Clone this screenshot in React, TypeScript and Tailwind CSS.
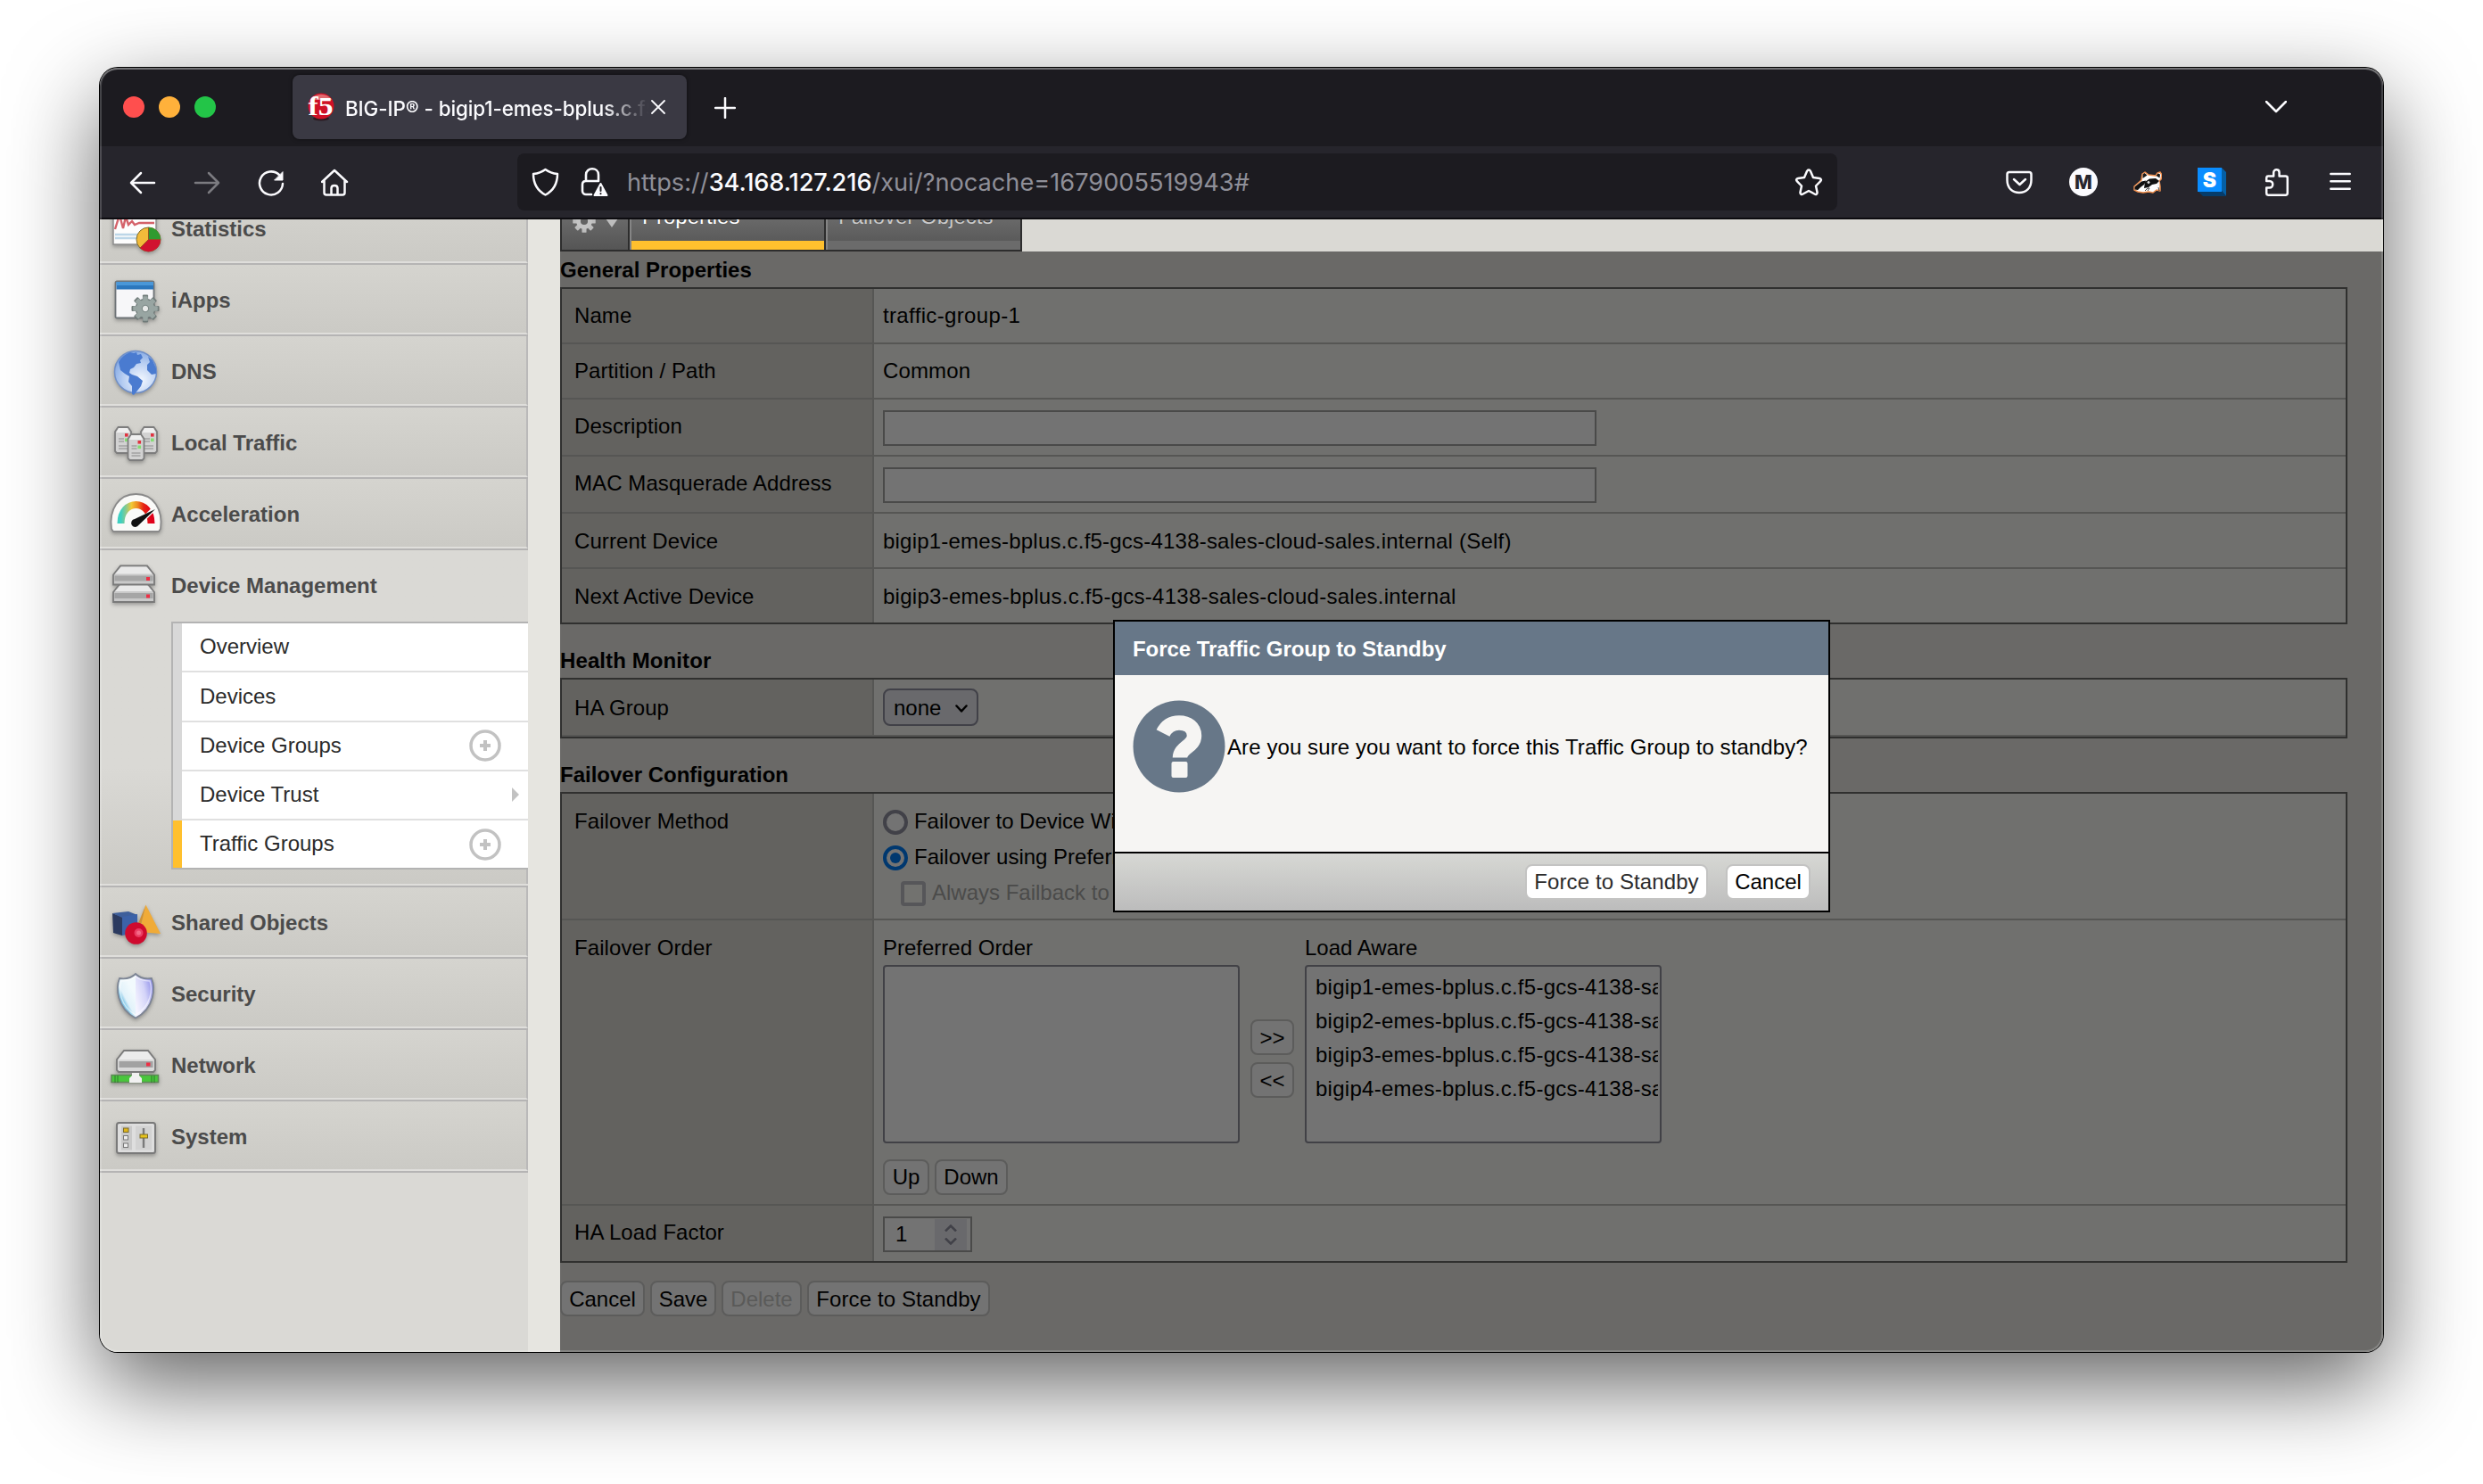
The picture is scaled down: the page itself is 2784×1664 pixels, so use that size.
import React from "react";

type P = { children?: React.ReactNode; className?: string };

/* ---------- sidebar icons, all on a 56x56 canvas ---------- */

const ShadowIcon = ({ children }: P) => (
  <svg viewBox="0 0 56 56" className="h-14 w-14 shrink-0 overflow-visible drop-shadow-[0_2px_2px_rgba(0,0,0,0.3)]">
    {children}
  </svg>
);

const Gear = ({ x, y, r, fill, hole }: { x: number; y: number; r: number; fill: string; hole: string }) => (
  <g transform={`translate(${x} ${y}) scale(${r / 15})`}>
    {[0, 45, 90, 135].map((a) => (
      <rect key={a} x="-3" y="-15" width="6" height="30" rx="1" fill={fill} transform={`rotate(${a})`} />
    ))}
    <circle r="11" fill={fill} />
    <circle r="4" fill={hole} stroke="#7d8a88" strokeWidth="1.2" />
  </g>
);

const StatisticsIcon = () => (
  <ShadowIcon>
    <rect x="4" y="-4" width="48" height="49" fill="#fdfdfd" stroke="#8d8d8d" strokeWidth="1.5" />
    <path d="M6 28l5-16 4 15 3-13 3 9 4-4 3 4 5-2h17" fill="none" stroke="#d4626a" strokeWidth="2.4" />
    <path d="M6 34h44M6 38h44" stroke="#bcd6e8" strokeWidth="2.4" />
    <circle cx="43.5" cy="39.5" r="13.5" fill="#f2bb3a" stroke="#7b6a2c" strokeWidth="1" />
    <path d="M43.5 39.5V26a13.5 13.5 0 0 1 13.5 13.5z" fill="#2f9a2f" />
    <path d="M43.5 39.5H57a13.5 13.5 0 0 1-23 9.6z" fill="#d1122f" />
    <path d="M43.5 26v13.5l-9.5 9.6M43.5 39.5H57" stroke="#8a4a20" strokeWidth="0.8" fill="none" />
  </ShadowIcon>
);

const IAppsIcon = () => (
  <ShadowIcon>
    <rect x="6.5" y="6.5" width="43" height="41" rx="1.5" fill="#f7f7f9" stroke="#6f7478" strokeWidth="1.8" />
    <rect x="7.500" y="7" width="41.500" height="8.500" fill="#2c77bd" />
    <rect x="7.500" y="7" width="41.500" height="4" fill="#4a97d8" />
    <Gear x={40} y={37} r={15.5} fill="#707b79" hole="#707b79" />
    <Gear x={40} y={37} r={13.8} fill="#98a5a2" hole="#e8eae9" />
  </ShadowIcon>
);

const DnsIcon = () => (
  <ShadowIcon>
    <defs>
      <radialGradient id="globe" cx="0.62" cy="0.7" r="0.75">
        <stop offset="0" stopColor="#f4f8ff" />
        <stop offset="0.55" stopColor="#b9cff2" />
        <stop offset="1" stopColor="#7da4e2" />
      </radialGradient>
    </defs>
    <circle cx="29" cy="28" r="23.500" fill="url(#globe)" stroke="#6f8fc8" strokeWidth="1.500" />
    <path
      d="M10 17c3-6 8-9 13-11l4 1 3-1 1 3 4-1 2 4-3 3 1 3-5 1-3 4-4 2-1 4 3 2 6 2 6 5-2 6-4 5-4 5-2-1v-9l-4-5 1-6-5-3-5-4z"
      fill="#4a7bd0"
    />
    <path d="M43 11l5 4 4 9 0 6-5 1-5-5 0-6 3-3z" fill="#4a7bd0" />
  </ShadowIcon>
);

const Tower = ({ x, y }: { x: number; y: number }) => (
  <g transform={`translate(${x} ${y})`}>
    <path d="M1 6l3.500-5h11L19 6v22l-2 2H3l-2-2z" fill="#d2d2d2" stroke="#7d7d7d" strokeWidth="1.800" />
    <path d="M2.500 7h15L15 2H5z" fill="#efefef" />
    <path d="M5 14h6M5 17h6M5 22h10M5 25h10" stroke="#a3a3a3" strokeWidth="1.500" />
    <rect x="12" y="8" width="3.600" height="3.600" fill="#e0323f" />
    <rect x="12" y="13.500" width="3.600" height="3.600" fill="#84dd73" />
  </g>
);

const LocalTrafficIcon = () => (
  <ShadowIcon>
    <Tower x={5} y={9} />
    <Tower x={34} y={9} />
    <Tower x={19.500} y={17} />
  </ShadowIcon>
);

const AccelerationIcon = () => (
  <ShadowIcon>
    <defs>
      <linearGradient id="dial" x1="0" x2="1">
        <stop offset="0" stopColor="#3ed0c2" />
        <stop offset="0.18" stopColor="#8fc98a" />
        <stop offset="0.35" stopColor="#f2c935" />
        <stop offset="0.55" stopColor="#ee8a20" />
        <stop offset="0.75" stopColor="#e62414" />
        <stop offset="1" stopColor="#e0001a" />
      </linearGradient>
    </defs>
    <path d="M2 44C-1 22 10 5 29.500 5S60 22 57 44l-2 3H4z" fill="#fafaf8" stroke="#8a8a8a" strokeWidth="1.800" />
    <path d="M12.500 38C12.500 10 46.500 10 46.500 38" fill="none" stroke="url(#dial)" strokeWidth="8" />
    <path d="M51 20L33 38" stroke="#fafaf8" strokeWidth="5" />
    <path d="M51 22L28 33a4.500 4.500 0 1 0 4.500 6.800z" fill="#111" />
  </ShadowIcon>
);

const Box = ({ y }: { y: number }) => (
  <g transform={`translate(0 ${y})`}>
    <path d="M4 11l8-10h30l8 10v11H4z" fill="#c9c9c9" stroke="#7a7a7a" strokeWidth="1.800" />
    <path d="M6 10l7-8h28l7 8z" fill="#e9e9e9" />
    <rect x="5.500" y="12" width="43" height="6" fill="#a6a6a6" />
    <rect x="41" y="13.500" width="4" height="4" fill="#ee2f45" />
  </g>
);

const DeviceIcon = () => (
  <ShadowIcon>
    <Box y={24} />
    <Box y={4.500} />
  </ShadowIcon>
);

const SharedObjectsIcon = () => (
  <ShadowIcon>
    <path d="M3 17l11 4v21L4 39z" fill="#2b3a5f" />
    <path d="M3 17l18-2 10 4-17 3z" fill="#3e5f9b" />
    <path d="M14 21l17-3v20l-17 4z" fill="#3c62a8" />
    <path d="M40.500 7.500L57 40l-24-2z" fill="#f0ab38" />
    <path d="M40.500 7.500L33 38l-4-2z" fill="#cf9031" />
    <circle cx="29.500" cy="39.500" r="12.300" fill="#cf0a2e" />
    <circle cx="32.500" cy="39" r="5" fill="#ea3d63" />
    <circle cx="32.500" cy="39" r="2.500" fill="#f56a88" />
  </ShadowIcon>
);

const SecurityIcon = () => (
  <ShadowIcon>
    <defs>
      <linearGradient id="shL" x1="0" y1="1" x2="0.6" y2="0.2">
        <stop offset="0" stopColor="#1f8ccd" />
        <stop offset="0.5" stopColor="#8fcdea" />
        <stop offset="0.62" stopColor="#e2f2fa" />
        <stop offset="1" stopColor="#f2fafd" />
      </linearGradient>
      <linearGradient id="shR" x1="1" y1="0.1" x2="0" y2="0.7">
        <stop offset="0" stopColor="#8080e6" />
        <stop offset="0.5" stopColor="#d4d4f8" />
        <stop offset="1" stopColor="#f5f4ff" />
      </linearGradient>
    </defs>
    <path d="M29 4.500c-5 5-11 6-18 5-4 10-4 33 18 45z" fill="url(#shL)" />
    <path d="M29 4.500c5 5 11 6 18 5 4 10 4 33-18 45z" fill="url(#shR)" />
    <path
      d="M29 5c-5 5-11 6-18 5-4 10-4 33 18 44.500C51 43 51 20 47 10c-7 1-13 0-18-5z"
      fill="none"
      stroke="#7d8594"
      strokeWidth="1.800"
    />
    <path d="M29 8c-5 4-10 5-16 5-3 9-2 28 16 38 18-10 19-29 16-38-6 0-11-1-16-5z" fill="none" stroke="#fff" strokeOpacity="0.55" strokeWidth="1.400" />
  </ShadowIcon>
);

const NetworkIcon = () => (
  <ShadowIcon>
    <path d="M8 21l8-10h27l8 10v12l-2 2H10l-2-2z" fill="#d9d9d9" stroke="#7a7a7a" strokeWidth="1.800" />
    <path d="M10 21l7-9h25l7 9z" fill="#ececec" />
    <rect x="10.500" y="23" width="38" height="7" fill="#a2a2a2" />
    <rect x="41" y="24.500" width="4.500" height="4" fill="#ee2f45" />
    <rect x="2" y="38.500" width="52.500" height="8" fill="#49c63c" stroke="#5e8a56" strokeWidth="1.500" />
    <path d="M6 39v8M9 39v8M47 39v8M50 39v8" stroke="#2f7d2a" strokeWidth="1" />
    <path d="M25 36h8v3l3 3v5H22v-5l3-3z" fill="#f1f1f1" />
  </ShadowIcon>
);

const SystemIcon = () => (
  <ShadowIcon>
    <rect x="8" y="12" width="43" height="34" rx="2.500" fill="#dedede" stroke="#7a7a7a" strokeWidth="2" />
    <rect x="13" y="15.500" width="12" height="27" fill="#c9c9c9" />
    <rect x="29" y="15.500" width="18" height="27" fill="#d2d2d2" />
    <rect x="15.500" y="18" width="5.500" height="4.500" fill="#dfb51a" stroke="#7a6a2a" />
    <rect x="15.500" y="26.500" width="5" height="4.500" fill="#eee" stroke="#777" />
    <rect x="15.500" y="35" width="5" height="4.500" fill="#eee" stroke="#777" />
    <path d="M38 18v22" stroke="#7a7a7a" strokeWidth="2.400" />
    <rect x="34" y="25" width="8.500" height="4" fill="#e6c31c" stroke="#7a6a2a" />
  </ShadowIcon>
);

/* ---------- browser chrome ---------- */

const Ico = ({ children, size = 32 }: { children: React.ReactNode; size?: number }) => (
  <svg
    width={size}
    height={size}
    viewBox="0 0 32 32"
    fill="none"
    stroke="#fbfbfe"
    strokeWidth="2.500"
    strokeLinecap="round"
    strokeLinejoin="round"
    className="shrink-0"
  >
    {children}
  </svg>
);

const TabStrip = () => (
  <div className="flex h-[88px] items-center bg-[#1c1b20]">
    <div className="ml-[26px] flex gap-4">
      <span className="h-6 w-6 rounded-full bg-[#ff4f4e]" />
      <span className="h-6 w-6 rounded-full bg-[#ffb13b]" />
      <span className="h-6 w-6 rounded-full bg-[#23c548]" />
    </div>
    <div className="ml-[86px] flex h-[72px] w-[442px] items-center rounded-lg bg-[#3a3943] pl-4 shadow-[0_0_4px_rgba(0,0,0,0.5)]">
      <svg width="32" height="32" viewBox="0 0 32 32" className="shrink-0">
        <ellipse cx="16" cy="29" rx="9" ry="2.500" fill="#2b1b22" />
        <circle cx="16" cy="15" r="14.500" fill="#cf1026" />
        <path d="M4 8a14.500 14.500 0 0 1 24 0z" fill="#e0696f" />
        <text x="15.500" y="25" textAnchor="middle" fontFamily="Liberation Serif, serif" fontWeight="700" fontSize="29" fill="#fff" textLength="28" lengthAdjust="spacingAndGlyphs">
          f5
        </text>
      </svg>
      <div className="ml-[11px] w-[340px] overflow-hidden [mask-image:linear-gradient(to_right,#000_290px,transparent_340px)]">
        <span className="block whitespace-nowrap pt-[3px] font-[Inter,sans-serif] text-[22.4px] font-medium leading-7 tracking-[-0.1px] text-[#fbfbfe]">
          BIG-IP® - bigip1-emes-bplus.c.f5
        </span>
      </div>
      <svg width="16" height="16" viewBox="0 0 16 16" className="ml-[3px] shrink-0" stroke="#fbfbfe" strokeWidth="1.800" strokeLinecap="round">
        <path d="M1 1l14 14M15 1L1 15" />
      </svg>
    </div>
    <svg width="24" height="24" viewBox="0 0 24 24" className="ml-[31px] mt-[2px] shrink-0" stroke="#fbfbfe" strokeWidth="2.500" strokeLinecap="round">
      <path d="M12 1v22M1 12h22" />
    </svg>
    <svg width="24" height="14" viewBox="0 0 24 14" className="ml-auto mr-[108px] shrink-0" fill="none" stroke="#fbfbfe" strokeWidth="2.500" strokeLinecap="round" strokeLinejoin="round">
      <path d="M1 1l11 11L23 1" />
    </svg>
  </div>
);

const Badger = () => (
  <svg width="32" height="25" viewBox="0 0 32 25" className="shrink-0">
    <path
      d="M1 21L1 17l8-7 1-7 3-2 4 3 8 1 2-3 3-1 2 3-1 5-2 2 1 6 0 5-4-1-4 3-5-1-6 1-6-1z"
      fill="#fff"
      stroke="#ef8f4e"
      strokeWidth="1.500"
      strokeLinejoin="round"
    />
    <path d="M10.500 8V3.500l2-1.500 3 2.500zM25.500 5l2-2.500 2.500 1-.5 4z" fill="#1a1a1a" />
    <path d="M1.500 20.500v-3l7.500-6 5-1-2 4.500-4 3-3 3zM13 12l5-3.500 7-.5 4 3-3 3-5 1-4 3-5 1z" fill="#111" />
    <path d="M27 14l2-3 .5 5-4 3z" fill="#f4f4f4" />
    <circle cx="17" cy="12.500" r="2" fill="#ddd" stroke="#111" />
    <path d="M13 22l3-3 2 0-2 3M28 18l1 4" fill="none" stroke="#333" strokeWidth="0.900" />
  </svg>
);

const NavBar = () => (
  <div className="flex h-20 items-center bg-[#26252c]">
    <div className="ml-8 flex gap-10">
      <Ico>
        <path d="M29 17H3M14 6L3 17l11 11" />
      </Ico>
      <span className="opacity-40">
        <Ico>
          <path d="M3 17h26M18 6l11 11-11 11" />
        </Ico>
      </span>
      <Ico>
        <path d="M29 18A13 13 0 1 1 25 8" />
        <path d="M29 5v9h-9z" fill="#fbfbfe" strokeWidth="1" />
      </Ico>
      <Ico>
        <path d="M1 16L15 3l14 13M3.500 14v14c0 1.500 1 2.500 2.500 2.500h18c1.500 0 2.500-1 2.500-2.500V14M11.500 30v-7c0-4 7-4 7 0v7" />
      </Ico>
    </div>
    <div className="ml-[188px] flex h-16 w-[1480px] items-center rounded-lg bg-[#1c1b20] pl-[15px]">
      <Ico>
        <path d="M16.500 2c4 3 8 4.500 13.500 5 0 9-3 18-13.500 23.500C6 25 3 16 3 7 8.500 6.500 12.500 5 16.500 2z" />
      </Ico>
      <svg width="34" height="34" viewBox="0 0 34 34" className="ml-[22px] shrink-0" fill="none" stroke="#fbfbfe" strokeWidth="2.600" strokeLinecap="round">
        <path d="M8 16V9c0-9 14-9 14 0v7M14 31H8c-2 0-4-1-4-4v-7c0-3 2-4 4-4h14" />
        <path d="M24.500 19l7 13h-14z" fill="#fbfbfe" strokeWidth="2" strokeLinejoin="round" />
        <path d="M24.500 23v4M24.500 30v.2" stroke="#1c1b20" strokeWidth="2" />
      </svg>
      <span className="ml-[20px] whitespace-nowrap pt-[2px] font-[Inter,sans-serif] text-[27.2px] leading-8 text-[#8f8f98]">
        https://<span className="font-medium tracking-[-0.1px] text-[#fbfbfe]">34.168.127.216</span>/xui/?nocache=1679005519943#
      </span>
      <span className="ml-auto mr-4">
        <Ico>
          <path d="M16 2.500c1 0 1.500.5 2 1.500l3 7 7 1c2 .3 2.500 2 1 3.300L24 20.500l1.500 7c.3 2-1.300 3-3 2L16 26l-6.500 3.500c-1.700 1-3.300 0-3-2L8 20.500l-5-5.200C1.500 14 2 12.300 4 12l7-1 3-7c.5-1 1-1.500 2-1.500z" />
        </Ico>
      </span>
    </div>
    <div className="ml-auto mr-8 flex items-center gap-10">
      <Ico>
        <path d="M5 5h22c1.500 0 2.500 1 2.500 2.500V14c0 9-6 14-13.500 14S2.500 23 2.500 14V7.500C2.500 6 3.500 5 5 5zM10 13l6.500 6 6.500-6" />
      </Ico>
      <span className="flex h-8 w-8 items-center justify-center rounded-full bg-[#fbfbfe] font-[Inter,sans-serif] text-[21px] font-extrabold leading-none text-[#26252c]">
        M
      </span>
      <span className="flex h-8 w-8 items-center justify-center">
        <Badger />
      </span>
      <svg width="32" height="32" viewBox="0 0 32 32" className="shrink-0">
        <path d="M27 0l5 5v27l-5-6z" fill="#0560a6" />
        <path d="M0 26h27l5 6H6z" fill="#053c6b" />
        <rect width="27" height="27" fill="#0a8dff" />
        <text x="13.500" y="22" textAnchor="middle" fontFamily="Inter, sans-serif" fontWeight="900" fontSize="23" fill="#fff">
          S
        </text>
      </svg>
      <Ico>
        <path d="M5.200 15v-3.500c0-1.200.8-2 2-2h6v-4c0-4.300 6.400-4.300 6.400 0v4h7c1.500 0 2.200.8 2.200 2v17c0 1.300-.8 2.200-2.200 2.200H7.400c-1.400 0-2.200-.8-2.200-2.200v-6h3.300c5 0 5-7.500 0-7.500z" />
      </Ico>
      <Ico>
        <path d="M5.300 7h21.400M5.300 15.300h21.400M5.300 23.700h21.400" />
      </Ico>
    </div>
  </div>
);

/* ---------- sidebar ---------- */

const NavItem = ({ icon, label }: { icon: React.ReactNode; label: string }) => (
  <div className="h-20 border-b-2 border-[#b5b4b4]">
    <div className="flex h-[78px] items-center border-b-2 border-b-[#dfdedb] border-r-2 border-r-[#bab9b9] bg-linear-to-b from-[#d5d4cf] to-[#cbcac5] pl-[11px] pt-[4px]">
      {icon}
      <span className="ml-[13px] text-[24px] font-bold leading-7 text-[#4b4b4b]">{label}</span>
    </div>
  </div>
);

const PlusCircle = () => (
  <svg width="36" height="36" viewBox="0 0 36 36" className="ml-auto mr-[30px]" fill="none" stroke="#c2c2c2">
    <circle cx="18" cy="18" r="16" strokeWidth="3.500" />
    <path d="M18 12v12M12 18h12" strokeWidth="4" />
  </svg>
);

const SubItem = ({ label, active, last, end, lift }: { label: string; active?: boolean; last?: boolean; lift?: boolean; end?: React.ReactNode }) => (
  <div className={last ? "flex h-[53px]" : "flex h-[55.25px]"}>
    <div className={active ? "w-[10px] bg-[#ffc02e]" : "w-[10px] bg-[#d8d8d8]"} />
    <div className={last ? "flex flex-1 items-center bg-white pl-5" : "flex flex-1 items-center border-b-2 border-[#e0e0e0] bg-white pl-5"}>
      <span className={lift ? "pb-[2px] text-[24px] leading-7 text-[#2b2b2b]" : "text-[24px] leading-7 text-[#2b2b2b]"}>{label}</span>
      {end}
    </div>
  </div>
);

const Sidebar = () => (
  <div className="w-[480px] shrink-0 overflow-hidden bg-[#dad9d5]">
    <div className="-mt-[29px] flex flex-col">
      <NavItem icon={<StatisticsIcon />} label="Statistics" />
      <NavItem icon={<IAppsIcon />} label="iApps" />
      <NavItem icon={<DnsIcon />} label="DNS" />
      <NavItem icon={<LocalTrafficIcon />} label="Local Traffic" />
      <NavItem icon={<AccelerationIcon />} label="Acceleration" />
      <div className="h-[378px] border-b-2 border-[#b5b4b4]">
        <div className="flex h-[376px] flex-col border-b-2 border-[#dfdedb] bg-linear-to-b from-[#dad9d5] from-65% to-[#cbcac5]">
          <div className="flex h-20 items-center pl-[11px]">
            <DeviceIcon />
            <span className="ml-[13px] text-[24px] font-bold leading-7 text-[#4b4b4b]">Device Management</span>
          </div>
          <div className="ml-20 flex flex-col border-y-2 border-l-2 border-[#b3b3b3]">
            <SubItem label="Overview" lift />
            <SubItem label="Devices" />
            <SubItem label="Device Groups" end={<PlusCircle />} />
            <SubItem
              label="Device Trust"
              end={
                <svg width="8" height="16" viewBox="0 0 8 16" className="ml-auto mr-[10px]" fill="#c2c2c2">
                  <path d="M0 0l8 8-8 8z" />
                </svg>
              }
            />
            <SubItem label="Traffic Groups" active last lift end={<PlusCircle />} />
          </div>
          <div className="flex-1 border-r-2 border-[#bab9b9]" />
        </div>
      </div>
      <NavItem icon={<SharedObjectsIcon />} label="Shared Objects" />
      <NavItem icon={<SecurityIcon />} label="Security" />
      <NavItem icon={<NetworkIcon />} label="Network" />
      <NavItem icon={<SystemIcon />} label="System" />
    </div>
  </div>
);

/* ---------- properties form ---------- */

const Table = ({ children, className = "" }: P) => (
  <div className={`w-[2004px] border-2 border-[#30302f] ${className}`}>{children}</div>
);

const Row = ({ label, children, h, line = true, pad = "pt-4" }: { label: string; children: React.ReactNode; h: string; line?: boolean; pad?: string }) => (
  <div className={`flex ${h} ${line ? "border-b-2 border-[#565654]" : ""}`}>
    <div className={`w-[350px] shrink-0 border-r-2 border-[#565654] bg-[#63625f] pl-[14px] tracking-[0.08px] ${pad}`}>{label}</div>
    <div className="flex-1 bg-[#70706e] pl-[10px]">{children}</div>
  </div>
);

const Btn = ({ children, className = "" }: P) => (
  <span className={`flex h-10 items-center justify-center whitespace-nowrap rounded-lg border-2 border-[#5c5c5b] bg-[#737373] ${className}`}>
    {children}
  </span>
);

const Heading = ({ children, className = "" }: P) => <div className={`font-bold ${className}`}>{children}</div>;

const hosts = [1, 2, 3, 4];

const Form = () => (
  <div className="flex flex-1 flex-col overflow-hidden bg-[#6a6967] text-[24px] leading-7 text-black">
    <div className="flex h-9 bg-[#dad9d4]">
      <div className="-mt-6 flex h-[60px] border-b-2 border-[#2d2d2d]">
        <div className="flex w-[78px] items-center border-x-2 border-[#2d2d2d] bg-linear-to-b from-[#777] to-[#555] pl-[10px]">
          <svg width="30" height="30" viewBox="-15 -15 30 30" className="-mt-[6px]">
            <g transform="scale(0.85)">
              {[0, 45, 90, 135].map((a) => (
                <rect key={a} x="-3" y="-15" width="6" height="30" rx="1" fill="#bdbdbd" transform={`rotate(${a})`} />
              ))}
              <circle r="10.500" fill="#c4c4c4" />
              <circle r="4.800" fill="#636363" />
            </g>
          </svg>
          <svg width="14" height="10" viewBox="0 0 14 10" className="-mt-[3px] ml-[9px]" fill="#bdbdbd">
            <path d="M0 0h14L7 10z" />
          </svg>
        </div>
        <div className="flex w-[220px] flex-col border-l-2 border-r-2 border-l-[#858585] border-r-[#2d2d2d] bg-linear-to-b from-[#777] to-[#555]">
          <div className="flex-1 pl-3 pt-[7px] text-white [text-shadow:0_-1px_1px_rgba(0,0,0,0.5)]">Properties</div>
          <div className="h-[10px] bg-[#ffc02e]" />
        </div>
        <div className="flex w-[220px] flex-col border-l-2 border-r-2 border-l-[#858585] border-r-[#2d2d2d] bg-linear-to-b from-[#777] to-[#555]">
          <div className="flex-1 pl-3 pt-[7px] text-[#c9c9c9] [text-shadow:0_-1px_1px_rgba(0,0,0,0.5)]">Failover Objects</div>
          <div className="h-[10px] bg-[#6b6b6b]" />
        </div>
      </div>
    </div>

    <Heading className="h-10 pt-[7px]">General Properties</Heading>
    <Table>
      <Row label="Name" h="h-[62px]">
        <div className="pt-4 tracking-[0.35px]">traffic-group-1</div>
      </Row>
      <Row label="Partition / Path" h="h-[62px]">
        <div className="pt-4 tracking-[0.15px]">Common</div>
      </Row>
      <Row label="Description" h="h-16">
        <div className="mt-3 h-10 w-[800px] border-2 border-[#4a4a49] bg-[#737373]" />
      </Row>
      <Row label="MAC Masquerade Address" h="h-16">
        <div className="mt-3 h-10 w-[800px] border-2 border-[#4a4a49] bg-[#737373]" />
      </Row>
      <Row label="Current Device" h="h-[62px]" pad="pt-[17px]">
        <div className="pt-[17px] tracking-[0.21px]">bigip1-emes-bplus.c.f5-gcs-4138-sales-cloud-sales.internal (Self)</div>
      </Row>
      <Row label="Next Active Device" h="h-[60px]" line={false} pad="pt-[17px]">
        <div className="pt-[17px] tracking-[0.27px]">bigip3-emes-bplus.c.f5-gcs-4138-sales-cloud-sales.internal</div>
      </Row>
    </Table>

    <Heading className="h-[60px] pt-[27px] tracking-[0.1px]">Health Monitor</Heading>
    <Table>
      <Row label="HA Group" h="h-16" pad="pt-[18px]">
        <div className="mt-[10px] flex h-[42px] w-[107px] items-center rounded-lg border-2 border-[#414148] bg-[#69696c] pl-[10px]">
          <span className="pt-[2px]">none</span>
          <svg width="14" height="9" viewBox="0 0 14 9" className="ml-auto mr-[10px] mt-[2px]" fill="none" stroke="#000" strokeWidth="2.500" strokeLinecap="round" strokeLinejoin="round">
            <path d="M1.500 1.500L7 7.500l5.500-6" />
          </svg>
        </div>
      </Row>
    </Table>

    <Heading className="h-[60px] pt-[27px]">Failover Configuration</Heading>
    <Table>
      <Row label="Failover Method" h="h-[142px]" pad="pt-[17px]">
        <div className="flex flex-col pt-[14px]">
          <div className="flex h-10 items-start gap-[7px]">
            <span className="mt-1 h-7 w-7 rounded-full border-4 border-[#414148] bg-[#737373]" />
            <span className="mt-[3px] tracking-[-0.05px]">Failover to Device With Best HA Score</span>
          </div>
          <div className="flex h-10 items-start gap-[7px]">
            <span className="mt-1 flex h-7 w-7 items-center justify-center rounded-full border-4 border-[#00386f] bg-[#737373]">
              <span className="h-3 w-3 rounded-full bg-[#00386f]" />
            </span>
            <span className="mt-[3px]">Failover using Preferred Device Order</span>
          </div>
          <div className="ml-5 flex h-10 items-start gap-[7px]">
            <span className="mt-1 h-7 w-7 rounded-[4px] border-4 border-[#565659] bg-[#72726f]" />
            <span className="mt-[3px] text-[#4b4b4a]">Always Failback to First Device</span>
          </div>
        </div>
      </Row>
      <Row label="Failover Order" h="h-80" pad="pt-[17px]">
        <div className="flex pt-[17px]">
          <div>
            <div className="h-[33px]">Preferred Order</div>
            <div className="h-[200px] w-[400px] rounded-[4px] border-2 border-[#414146] bg-[#737373]" />
          </div>
          <div className="ml-3 flex w-[49px] flex-col gap-2 pt-[94px]">
            <Btn className="pt-[2px]">&gt;&gt;</Btn>
            <Btn className="pt-[2px]">&lt;&lt;</Btn>
          </div>
          <div className="ml-3">
            <div className="h-[33px]">Load Aware</div>
            <div className="h-[200px] w-[400px] rounded-[4px] border-2 border-[#414146] bg-[#737373] pl-[10px] pr-[2px] pt-1">
              {hosts.map((n) => (
                <div key={n} className="h-[38px] overflow-hidden whitespace-nowrap leading-[38px] tracking-[0.27px]">
                  bigip{n}-emes-bplus.c.f5-gcs-4138-sales-cloud-sales.internal
                </div>
              ))}
            </div>
          </div>
        </div>
        <div className="mt-[18px] flex gap-[6px]">
          <Btn className="w-[52px]">Up</Btn>
          <Btn className="w-[82px]">Down</Btn>
        </div>
      </Row>
      <Row label="HA Load Factor" h="h-[62px]" line={false}>
        <div className="mt-3 flex h-10 w-[100px] items-center border-2 border-[#4a4a49] bg-[#737373] pl-[12px] pr-1">
          1
          <div className="ml-auto flex h-[35px] w-9 flex-col items-center justify-between bg-[#69696c] py-[6px]">
            <svg width="14" height="8" viewBox="0 0 14 8" fill="none" stroke="#414148" strokeWidth="2.500">
              <path d="M1 7.500L7 1.500l6 6" />
            </svg>
            <svg width="14" height="8" viewBox="0 0 14 8" fill="none" stroke="#414148" strokeWidth="2.500">
              <path d="M1 .5l6 6 6-6" />
            </svg>
          </div>
        </div>
      </Row>
    </Table>
    <div className="mt-5 flex gap-[6px]">
      <Btn className="w-[95px] pt-px">Cancel</Btn>
      <Btn className="w-[74px] pt-px">Save</Btn>
      <Btn className="w-[90px] bg-[#6d6d6c] pt-px text-[#5a5a59]">Delete</Btn>
      <Btn className="w-[205px] pt-px tracking-[0.1px]">Force to Standby</Btn>
    </div>
  </div>
);

/* ---------- confirmation dialog ---------- */

const Dialog = () => (
  <div className="absolute left-[1136px] top-[619px] flex h-[328px] w-[804px] flex-col border-2 border-black text-[24px] leading-7">
    <div className="h-[60px] bg-[#677788] pl-5 pt-[17px] font-bold tracking-[-0.06px] text-white">Force Traffic Group to Standby</div>
    <div className="flex h-[198px] items-start bg-[#f6f5f3] pl-5 pt-[28px]">
      <svg width="104" height="104" viewBox="0 0 104 104" className="shrink-0">
        <circle cx="52" cy="52" r="51.500" fill="#677788" />
        <path
          d="M34 37c4-8 10-11.500 18-11.500 10 0 17 5.500 17 14.500 0 12-16 13-16 24.500"
          fill="none"
          stroke="#f6f5f3"
          strokeWidth="16.500"
        />
        <rect x="43.500" y="69" width="18" height="18" rx="2" fill="#f6f5f3" />
      </svg>
      <span className="ml-[2px] mt-[39px] whitespace-nowrap tracking-[0.09px] text-black">Are you sure you want to force this Traffic Group to standby?</span>
    </div>
    <div className="flex flex-1 items-start justify-end gap-5 border-t-2 border-black bg-linear-to-b from-[#d7d8d4] to-[#bcbcbc] pr-[20px] pt-[12px]">
      <span className="flex h-10 w-[205px] items-center justify-center whitespace-nowrap rounded-lg border-2 border-[#c3c3c2] bg-white tracking-[0.1px] text-[#2b2b2b]">Force to Standby</span>
      <span className="flex h-10 w-[95px] items-center justify-center rounded-lg border-2 border-[#c3c3c2] bg-white text-black">Cancel</span>
    </div>
  </div>
);

export default function App() {
  return (
    <div className="h-[1664px] w-[2784px] overflow-hidden bg-white pl-28 pt-[76px] font-['Liberation_Sans',Arial,sans-serif]">
      <div className="h-[1440px] w-[2560px] rounded-[20px] shadow-[0_0_0_1px_#000,0_36px_100px_rgba(0,0,0,0.62)]">
        <div className="relative flex h-full flex-col overflow-hidden rounded-[20px]">
          <TabStrip />
          <NavBar />
          <div className="h-[2px] bg-[#0d0c10]" />
          <div className="flex h-[1270px]">
            <Sidebar />
            <div className="w-9 shrink-0 bg-[#e6e5e0]" />
            <Form />
          </div>
          <Dialog />
          <div className="pointer-events-none absolute inset-0 rounded-[20px] shadow-[inset_0_2px_0_rgba(255,255,255,0.25),inset_0_0_0_2px_rgba(255,255,255,0.18)]" />
        </div>
      </div>
    </div>
  );
}
